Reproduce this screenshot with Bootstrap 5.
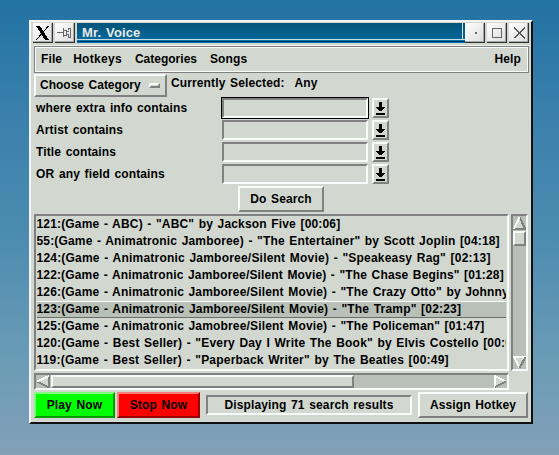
<!DOCTYPE html>
<html lang="en">
<head>
<meta charset="utf-8">
<meta name="viewport" content="width=device-width, initial-scale=1">
<title>Mr. Voice</title>
<link href="https://cdn.jsdelivr.net/npm/bootstrap@5.3.0/dist/css/bootstrap.min.css" rel="stylesheet">
<style>
:root{--face:#d2d8d0;--hi:#f8fcf8;--lo:#808080;--trough:#b8c0b8}
body{height:455px;overflow:hidden;background:linear-gradient(#2272a3 0,#3a80ac 25%,#4c8cb0 52%,#6c9cb6 80%,#82a0b8 100%);font:bold 12px/17px "Liberation Sans",Arial,sans-serif;color:#000;letter-spacing:.12px;word-spacing:1.2px;white-space:nowrap}
svg{display:block;shape-rendering:crispEdges;flex:none}
.window{width:504px;height:404px;margin:20px 0 0 29px;background:var(--face);border:2px solid;border-color:#f4f4f4 #101010 #101010 #f4f4f4;box-shadow:inset -1px -1px #d8dcd8;padding:1px 0 0 2px}
.titlebar{height:23px}
.frame-btn{width:20px;height:20px;background:linear-gradient(135deg,#fff,#dcdcdc);border-right:1px solid #303030;border-bottom:1px solid #303030;box-shadow:inset -1px -1px #aaa}
.gap-sides{margin:0 2px}
.drop-1{margin-top:1px}
.caption{width:388px;height:20px;background:linear-gradient(#045478,#086ca0);color:#e8e8e8;font-size:13px;line-height:19px;padding-left:5px;border-bottom:1px solid #0474b0;box-shadow:inset 0 -1px #003458,inset 0 -2px #0474b0,inset 0 -3px #c8dce8}
.caption-end{width:1px;height:17px;background:#d8e4e8;margin-right:2px}
.client{width:495px;margin-left:1px}
.menus{height:27px;border:1px solid var(--lo);box-shadow:inset 0 0 0 1px var(--hi),0 -1px #f0f2f0;padding:0 7px 0 6px;line-height:25px}
.menus .nav-link{padding:0;color:#000}
.m-file{margin-right:11px}
.m-hot{margin-right:13px;letter-spacing:.3px}
.m-cat{margin-right:13px;letter-spacing:0}
.raised{border:2px solid;border-color:var(--hi) var(--lo) var(--lo) var(--hi);background:var(--face)}
.sunken{border:2px solid;border-color:var(--lo) var(--hi) var(--hi) var(--lo);background:var(--face)}
.tk-btn{border-radius:0;padding:0;font:inherit;letter-spacing:inherit;word-spacing:inherit;color:#000;height:26px;line-height:22px;flex:none}
.chooser{width:133px;height:23px;line-height:19px;padding:0 5px 0 4px;letter-spacing:0}
.knob{width:11px;height:5px}
.picked{margin-left:4px;line-height:19px}
.picked.any{margin-left:10px}
.query{height:22px;padding-left:2px}
.query label{width:185px;line-height:22px}
.entry{width:148px;height:22px;border:1px solid transparent;margin-right:3px}
.entry.active{border-color:#000}
.entry input{display:block;width:100%;height:20px;border-radius:0;padding:0 2px;outline:0}
.drop{width:17px;height:20px}
.search{width:86px;margin:1px 0 2px 204px}
.results{width:475px;height:157px;overflow:hidden;padding-left:1px}
.results .list-group-item{height:17px;line-height:17px;padding:0;margin:0 1px 0 0;border:0;background:none;color:#000;overflow:hidden;word-spacing:1px;text-indent:-.5px}
.results .list-group-item.chosen{background:var(--trough);box-shadow:inset 0 1px var(--hi),inset 0 -1px #687068}
.s1{letter-spacing:.17px}.s2{letter-spacing:.19px}.s3{letter-spacing:.21px}.s4{letter-spacing:.15px}
.scroll-v{width:17px;height:157px;background:var(--trough);margin-left:2px}
.scroll-v .thumb{height:15px;width:13px;margin-top:1px}
.scroll-h{width:475px;height:17px;background:var(--trough);margin-top:2px}
.scroll-h .thumb{width:303px;height:13px;margin-left:1px}
.actions{margin-top:2px}
.go{width:81px;background:#00ff00;border-color:#80ff80 #009a00 #009a00 #80ff80}
.halt{width:83px;background:#ff0000;border-color:#ff8080 #9a0000 #9a0000 #ff8080;margin-left:2px}
.status{width:206px;height:20px;line-height:16px;margin-left:6px}
.assign{width:110px;margin-left:6px}
</style>
</head>
<body>
<main class="window">
  <header class="titlebar d-flex">
    <div class="frame-btn"><svg width="19" height="19"><path d="M3 3h4l9 14h-4z" fill="#000"/><path d="M15.500 3 10.500 8.500M8.500 11 3 17" stroke="#000"/></svg></div>
    <div class="frame-btn gap-sides"><svg width="19" height="19" fill="none" stroke="#666"><path d="M2 9.500h6M8.500 5v9M8.500 7.500h3v5h-3M11.500 8.500h2M11.500 11.500h2M13.500 7V5.500h2v9h-2V12"/></svg></div>
    <div class="caption d-flex justify-content-between"><span>Mr. Voice</span><i class="caption-end"></i></div>
    <div class="frame-btn"><svg width="19" height="19"><path d="M10 9h2v2h-2z" fill="#666"/></svg></div>
    <div class="frame-btn gap-sides"><svg width="19" height="19"><path d="M5.500 5.500h9v9h-9z" fill="none" stroke="#666"/></svg></div>
    <div class="frame-btn"><svg width="19" height="19"><path d="M5 5 16 15M16 5 5 15" stroke="#555" stroke-width="1.4"/></svg></div>
  </header>
  <div class="client">
    <nav class="menus nav flex-nowrap">
      <a class="nav-link m-file">File</a><a class="nav-link m-hot">Hotkeys</a><a class="nav-link m-cat">Categories</a><a class="nav-link">Songs</a><a class="nav-link ms-auto">Help</a>
    </nav>
    <div class="d-flex drop-1">
      <button class="btn tk-btn raised chooser d-flex align-items-center justify-content-between">Choose Category <span class="raised knob"></span></button>
      <span class="picked">Currently Selected:</span><span class="picked any">Any</span>
    </div>
    <form>
      <div class="query d-flex"><label for="q1">where extra info contains</label><div class="entry active"><input id="q1" class="sunken"></div><button type="button" class="btn tk-btn raised drop drop-1"><svg width="13" height="16"><use href="#down"/></svg></button></div>
      <div class="query d-flex"><label for="q2">Artist contains</label><div class="entry"><input id="q2" class="sunken"></div><button type="button" class="btn tk-btn raised drop drop-1"><svg width="13" height="16"><use href="#down"/></svg></button></div>
      <div class="query d-flex"><label for="q3">Title contains</label><div class="entry"><input id="q3" class="sunken"></div><button type="button" class="btn tk-btn raised drop drop-1"><svg width="13" height="16"><use href="#down"/></svg></button></div>
      <div class="query d-flex"><label for="q4">OR any field contains</label><div class="entry"><input id="q4" class="sunken"></div><button type="button" class="btn tk-btn raised drop drop-1"><svg width="13" height="16"><use href="#down"/></svg></button></div>
      <button type="button" class="btn tk-btn raised search d-block">Do Search</button>
    </form>
    <div class="d-flex">
      <ul class="list-group list-group-flush rounded-0 results sunken mb-0">
        <li class="list-group-item s1">121:(Game - ABC) - "ABC" by Jackson Five [00:06]</li>
        <li class="list-group-item s1">55:(Game - Animatronic Jamboree) - "The Entertainer" by Scott Joplin [04:18]</li>
        <li class="list-group-item s3">124:(Game - Animatronic Jamboree/Silent Movie) - "Speakeasy Rag" [02:13]</li>
        <li class="list-group-item s4">122:(Game - Animatronic Jamboree/Silent Movie) - "The Chase Begins" [01:28]</li>
        <li class="list-group-item s1">126:(Game - Animatronic Jamboree/Silent Movie) - "The Crazy Otto" by Johnny</li>
        <li class="list-group-item s2 chosen">123:(Game - Animatronic Jamboree/Silent Movie) - "The Tramp" [02:23]</li>
        <li class="list-group-item s1">125:(Game - Animatronic Jamobree/Silent Movie) - "The Policeman" [01:47]</li>
        <li class="list-group-item s2">120:(Game - Best Seller) - "Every Day I Write The Book" by Elvis Costello [00:0</li>
        <li class="list-group-item s3">119:(Game - Best Seller) - "Paperback Writer" by The Beatles [00:49]</li>
      </ul>
      <div class="scroll-v sunken d-flex flex-column">
        <svg width="13" height="14"><path d="M6.500 1 12.500 13H.5z" fill="#d2d8d0"/><path d="M6.500 1 12 12.500" stroke="#808080" stroke-width="2"/><path d="M0 13h13" stroke="#808080" stroke-width="2"/><path d="M6.500 1 1 13" stroke="#f8fcf8" stroke-width="2"/></svg>
        <div class="thumb raised"></div>
        <svg class="mt-auto" width="13" height="13"><path d="M.5 1h12L6.500 12z" fill="#d2d8d0"/><path d="M13 1H1l5.500 11" fill="none" stroke="#f8fcf8" stroke-width="2"/><path d="M12.500 1 6.500 12" stroke="#808080" stroke-width="2"/></svg>
      </div>
    </div>
    <div class="scroll-h sunken d-flex">
      <svg width="14" height="13"><path d="M1 6.500 13 .5v12z" fill="#d2d8d0"/><path d="M13 0v12.500L1 6.500" fill="none" stroke="#808080" stroke-width="2"/><path d="M1 6.500 13 1" stroke="#f8fcf8" stroke-width="2"/></svg>
      <div class="thumb raised"></div>
      <svg class="ms-auto" width="13" height="13"><path d="M1 1 12 6.500 1 12z" fill="#d2d8d0"/><path d="M1 13V1l11 5.500" fill="none" stroke="#f8fcf8" stroke-width="2"/><path d="M1 12 12 6.500" stroke="#808080" stroke-width="2"/></svg>
    </div>
    <div class="actions d-flex align-items-center">
      <button class="btn tk-btn raised go">Play Now</button>
      <button class="btn tk-btn raised halt">Stop Now</button>
      <div class="status sunken text-center">Displaying 71 search results</div>
      <button class="btn tk-btn raised assign">Assign Hotkey</button>
    </div>
  </div>
</main>
<svg width="0" height="0"><defs><path id="down" d="M5 2h3v5h3v1h-1v1H9v1H8v1H5v-1H4V9H3V8H2V7h3zM2 13h9v2H2z" fill="#000"/></defs></svg>
<script src="https://cdn.jsdelivr.net/npm/bootstrap@5.3.0/dist/js/bootstrap.bundle.min.js"></script>
</body>
</html>
